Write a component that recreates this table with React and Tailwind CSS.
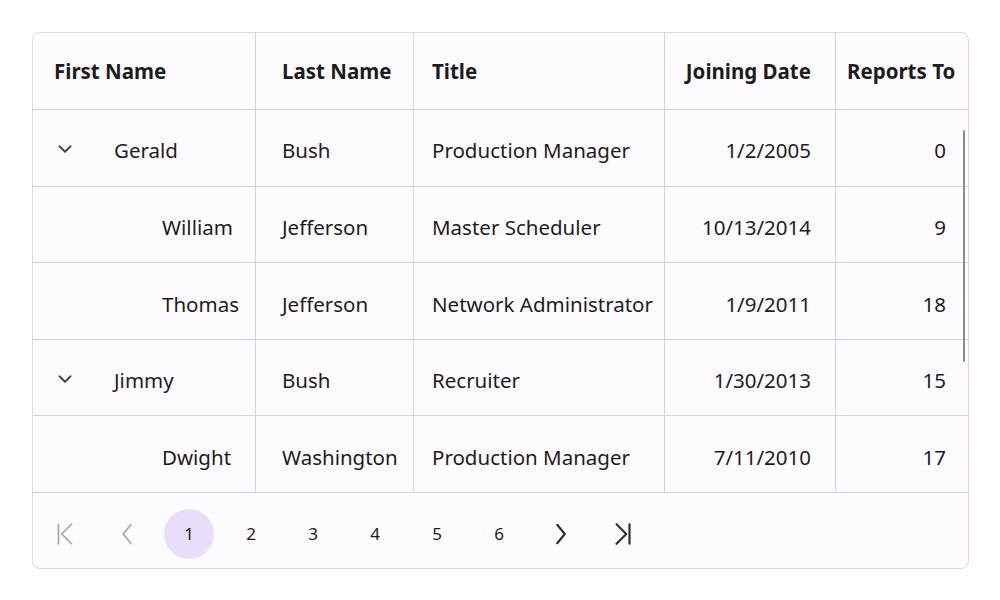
import React from 'react';
import { ChevronDown } from 'lucide-react';

const rows = [
  { first: 'Gerald', last: 'Bush', title: 'Production Manager', date: '1/2/2005', reports: '0', parent: true },
  { first: 'William', last: 'Jefferson', title: 'Master Scheduler', date: '10/13/2014', reports: '9' },
  { first: 'Thomas', last: 'Jefferson', title: 'Network Administrator', date: '1/9/2011', reports: '18' },
  { first: 'Jimmy', last: 'Bush', title: 'Recruiter', date: '1/30/2013', reports: '15', parent: true },
  { first: 'Dwight', last: 'Washington', title: 'Production Manager', date: '7/11/2010', reports: '17' },
];

const cols = 'grid grid-cols-[223px_158px_251px_171px_160px]';

function PagerIcon({ d, muted }) {
  return (
    <div className={`w-[50px] h-[50px] flex items-center justify-center ${muted ? 'text-[#a6a4a9]' : 'text-[#2f2d33]'}`}>
      <svg width="26" height="26" viewBox="0 0 24 24" fill="none" stroke="currentColor" strokeWidth={muted ? 1.6 : 2} strokeLinecap="round" strokeLinejoin="round">
        <path d={d} />
      </svg>
    </div>
  );
}

function App() {
  return (
    <div className="w-[1000px] h-[600px] bg-white p-8 text-[#1d1b20]" style={{ fontFamily: '"Noto Sans", sans-serif' }}>
      <div className="relative w-[937px] h-[537px] rounded-lg border border-[#dcd9df] bg-[#fdfbff] overflow-hidden">
        <div className={`${cols} h-[77px] border-b border-[#d8d4dc] text-[20.5px] font-bold`}>
          <div className="flex items-center pl-[21px] border-r border-[#d8d4dc]">First Name</div>
          <div className="flex items-center pl-[26px] border-r border-[#d8d4dc]">Last Name</div>
          <div className="flex items-center pl-[18px] border-r border-[#d8d4dc]">Title</div>
          <div className="flex items-center justify-end pr-[24px] border-r border-[#d8d4dc] whitespace-nowrap">Joining Date</div>
          <div className="flex items-center pl-[11px] whitespace-nowrap">Reports To</div>
        </div>

        {rows.map((r, i) => (
          <div key={i} className={`${cols} h-[76.6px] border-b border-[#d8d4dc] text-[20.5px]`}>
            <div className="flex items-center pl-[21px] pt-[6px] border-r border-[#d8d4dc]">
              {r.parent ? (
                <>
                  <ChevronDown size={22} strokeWidth={2} className="text-[#45424a] -mt-[4px]" />
                  <span className="ml-[38px]">{r.first}</span>
                </>
              ) : (
                <span className="ml-[108px]">{r.first}</span>
              )}
            </div>
            <div className="flex items-center pl-[26px] pt-[6px] border-r border-[#d8d4dc]">{r.last}</div>
            <div className="flex items-center pl-[18px] pt-[6px] border-r border-[#d8d4dc] whitespace-nowrap">{r.title}</div>
            <div className="flex items-center justify-end pr-[24px] pt-[6px] border-r border-[#d8d4dc]">{r.date}</div>
            <div className="flex items-center justify-end pr-[50px] pt-[6px]">{r.reports}</div>
          </div>
        ))}

        <div className="flex items-center gap-[12px] pl-[7px] pt-[16px] text-[17px]">
          <PagerIcon d="M6 3v18M18 3l-9 9 9 9" muted />
          <PagerIcon d="M15.5 3.5l-7 8.5 7 8.5" muted />
          {[1, 2, 3, 4, 5, 6].map((n) => (
            <div
              key={n}
              className={`w-[50px] h-[50px] rounded-full flex items-center justify-center ${n === 1 ? 'bg-[#e8defb]' : ''}`}
            >
              {n}
            </div>
          ))}
          <PagerIcon d="M8.5 3.5l7 8.5-7 8.5" />
          <PagerIcon d="M6 3l9 9-9 9M18 3v18" />
        </div>

        <div className="absolute left-[930px] top-[97px] w-[2px] h-[232px] rounded-full bg-[#8d8a91]"></div>
      </div>
    </div>
  );
}

export default App;
